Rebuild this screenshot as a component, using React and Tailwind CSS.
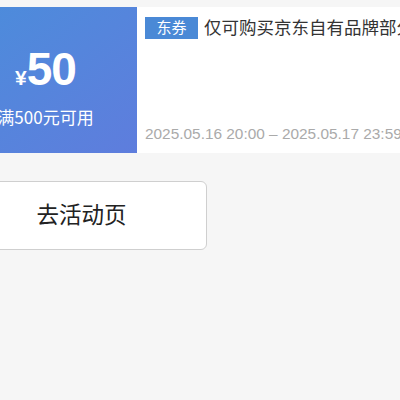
import React from 'react';

function App() {
  return (
    <div
      className="min-h-screen w-[400px] overflow-hidden bg-[#f6f6f6] pt-[7px]"
      style={{ fontFamily: '"Noto Sans CJK SC", "Liberation Sans", sans-serif' }}
    >
      <div className="-ml-[46px] flex h-[146px] w-[600px]">
        <div className="flex w-[183px] shrink-0 flex-col items-center justify-center bg-gradient-to-br from-[#4a8ddb] to-[#5e7ddd] pt-[10px] text-white">
          <div className="flex items-baseline leading-none" style={{ fontFamily: '"Liberation Sans", sans-serif' }}>
            <span className="text-[21px] font-bold">¥</span>
            <span className="text-[46px] font-bold tracking-[-1px]">50</span>
          </div>
          <div className="mt-[16px] whitespace-nowrap text-[17px] leading-none">满500元可用</div>
        </div>
        <div className="flex flex-1 flex-col justify-between bg-white pb-[8px] pl-[8px] pt-[8px]">
          <div className="flex items-center">
            <span className="flex h-[22px] w-[53px] items-center justify-center bg-[#4a89d6] text-[15px] text-white">
              东券
            </span>
            <span className="ml-[6px] -mt-[1px] whitespace-nowrap text-[17.5px] text-[#333]">
              仅可购买京东自有品牌部分商品
            </span>
          </div>
          <div
            className="whitespace-nowrap text-[15.4px] text-[#aaa]"
            style={{ fontFamily: '"Liberation Sans", sans-serif' }}
          >
            2025.05.16 20:00 – 2025.05.17 23:59
          </div>
        </div>
      </div>
      <div className="-ml-[44px] mt-[28px] flex h-[69px] w-[251px] items-center justify-center rounded-[6px] border border-[#cfcfcf] bg-white pb-[3px] text-[22.5px] text-[#222]">
        去活动页
      </div>
    </div>
  );
}

export default App;
